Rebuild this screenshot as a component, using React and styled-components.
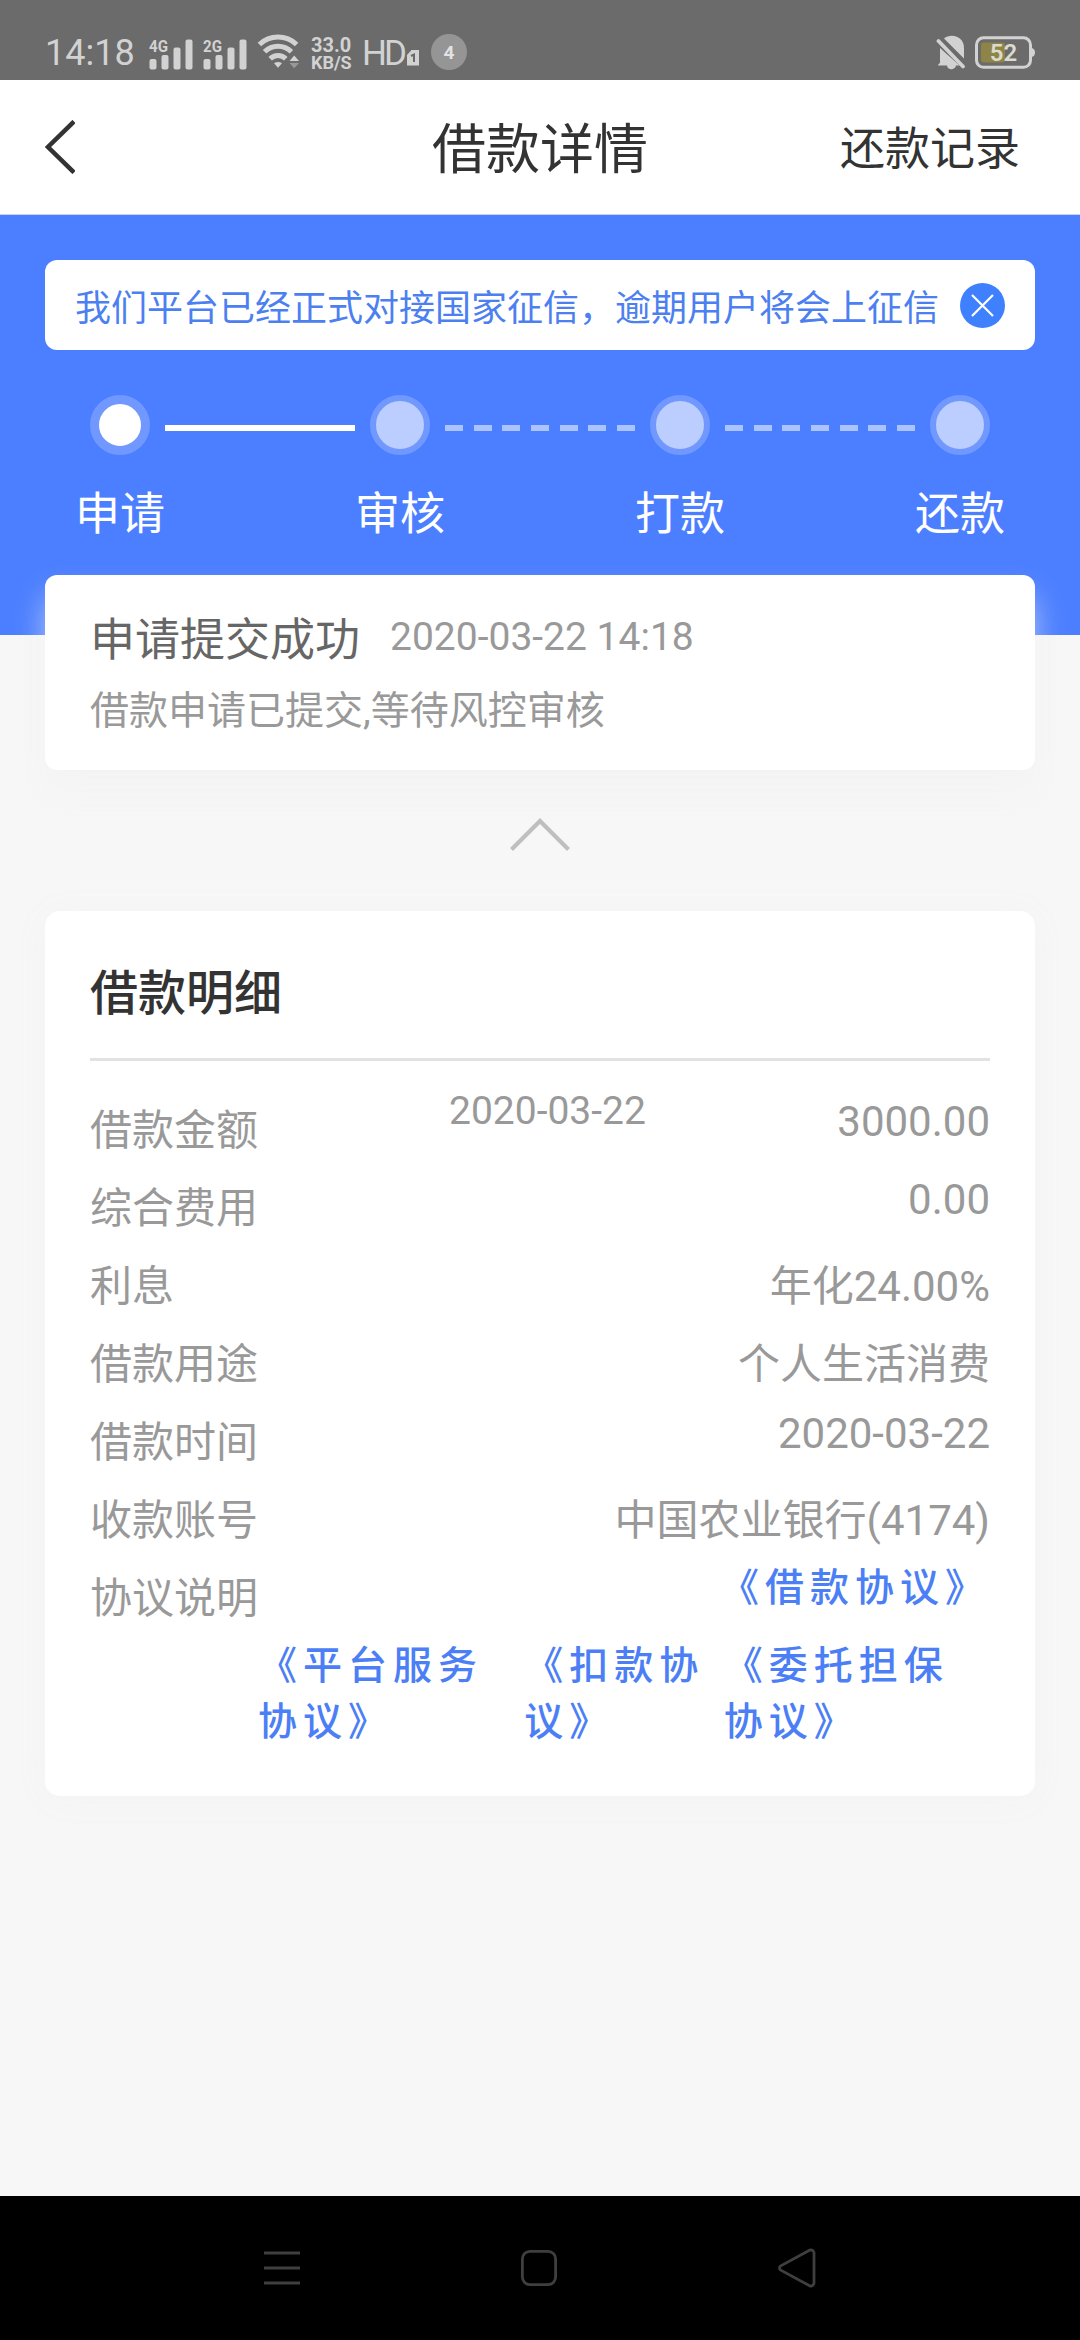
import { useState } from "react";
import styled, { createGlobalStyle, css } from "styled-components";

const GlobalStyle = createGlobalStyle`
  * {
    box-sizing: border-box;
  }
  body {
    margin: 0;
    background: #f7f7f7;
    font-family: Roboto, "Noto Sans CJK SC", sans-serif;
  }
  button {
    padding: 0;
    border: none;
    background: none;
    font: inherit;
    color: inherit;
  }
  svg {
    display: block;
    flex: none;
  }
`;

const Page = styled.div`
  width: 1080px;
  height: 2340px;
  display: flex;
  flex-direction: column;
  overflow: hidden;
`;

/* status bar */

const StatusBar = styled.div`
  height: 80px;
  padding: 26px 45px 0 45px;
  display: flex;
  align-items: center;
  background: #6b6b6b;
  color: #d2d2d2;
`;

const Clock = styled.span`
  width: 104px;
  font-size: 36px;
  line-height: 54px;
`;

const Signals = styled.div`
  display: flex;
  align-items: flex-end;
  gap: 10px;
  margin-bottom: 5px;
`;

const Speed = styled.div`
  width: 51px;
  margin-left: 10px;
  font-size: 18px;
  font-weight: 700;
  line-height: 17px;
  white-space: nowrap;
`;

const SpeedValue = styled.div`
  font-size: 20px;
  line-height: 18px;
`;

const Volte = styled.div`
  width: 69px;
  display: flex;
  align-items: center;
  gap: 3px;
  font-size: 35px;
  letter-spacing: -3px;

  svg {
    margin-top: 10px;
  }
`;

const Count = styled.span`
  width: 36px;
  height: 36px;
  margin-top: -2px;
  border-radius: 50%;
  background: #959595;
  color: #e2e2e2;
  font-size: 19px;
  font-weight: 700;
  line-height: 38px;
  text-align: center;
`;

const StatusRight = styled.div`
  margin-left: auto;
  margin-bottom: 1px;
  display: flex;
  align-items: center;
  gap: 9px;
`;

/* header */

const Header = styled.header`
  height: 135px;
  padding: 0 60px 0 45px;
  display: grid;
  grid-template-columns: 1fr auto 1fr;
  align-items: center;
  background: #fff;
  border-bottom: 1px solid #c4d6ff;
  color: #333;
`;

const Back = styled.button`
  width: 30px;
`;

const Title = styled.h1`
  margin: 0 0 4px 15px;
  font-size: 54px;
  font-weight: 400;
`;

const Records = styled.button`
  justify-self: end;
  margin-bottom: 4px;
  font-size: 45px;
`;

/* blue progress area */

const Hero = styled.section`
  height: 420px;
  padding: 45px 45px 0;
  flex: none;
  background: #4c7fff;
`;

const Notice = styled.div`
  height: 90px;
  padding: 0 30px;
  display: flex;
  align-items: center;
  justify-content: space-between;
  border-radius: 12px;
  background: #fff;
  color: #4c7ff0;
  font-size: 36px;
  white-space: nowrap;
`;

const Steps = styled.div`
  display: flex;
  justify-content: space-between;
  margin: 45px 30px 0;
`;

const Step = styled.div`
  width: 90px;
  display: flex;
  flex-direction: column;
  align-items: center;
  color: #fff;
  font-size: 45px;
  line-height: 66px;
  white-space: nowrap;
`;

const Dot = styled.span`
  width: 60px;
  height: 60px;
  margin-bottom: 27px;
  border: ${(p) => (p.$active ? 9 : 6)}px solid #7098ff;
  border-radius: 50%;
  background: ${(p) => (p.$active ? "#fff" : "#bccdff")};
`;

const Line = styled.div`
  flex: 1;
  height: 6px;
  margin-top: 30px;
  display: flex;
  justify-content: space-between;
  ${(p) =>
    p.$active &&
    css`
      background: #fff;
    `}
`;

const Dash = styled.span`
  width: 18px;
  background: #abc3ff;
`;

/* cards */

const Card = styled.section`
  margin: 0 45px;
  padding: 0 45px;
  flex: none;
  border-radius: 15px;
  background: #fff;
  box-shadow: 0 3px 36px #f3f3f3;
`;

const StatusCard = styled(Card)`
  height: 195px;
  margin-top: -60px;
  padding-top: 30px;
  border-radius: 12px;
  box-shadow: 0 21px 30px rgba(241, 241, 241, 0.6);
`;

const StatusHead = styled.div`
  display: flex;
  align-items: center;
  gap: 30px;
  height: 63px;
  color: #666;
  font-size: 45px;
`;

const StatusTime = styled.time`
  margin-top: 1px;
  color: #999;
  font-size: 39px;
`;

const StatusText = styled.p`
  margin: 11px 0 0;
  color: #999;
  font-size: 39px;
`;

const Toggle = styled.button`
  height: 141px;
  padding-top: 48px;
  display: flex;
  justify-content: center;
  flex: none;
`;

const DetailCard = styled(Card)`
  height: 885px;
`;

const DetailTitle = styled.h2`
  height: 150px;
  margin: 0 0 36px;
  padding-top: 43px;
  border-bottom: 3px solid #e2e2e2;
  color: #333;
  font-size: 48px;
  font-weight: 500;
`;

const Row = styled.div`
  height: 78px;
  display: flex;
  align-items: flex-start;
  color: #999;
  font-size: 42px;
`;

const Label = styled.span`
  flex: none;
  width: 168px;
  margin-top: -1px;
`;

const Value = styled.span`
  margin-top: ${(p) => (p.$text ? -1 : 0)}px;
  margin-left: auto;
`;

const StartDate = styled.span`
  margin: -9px 0 0 191px;
  font-size: 39px;
`;

const Agreements = styled.div`
  flex: 1;
  min-width: 0;
  margin-top: -9px;
`;

const AgreementLine = styled.div`
  height: 78px;
  display: flex;
  justify-content: flex-end;
`;

const Agreement = styled.a`
  color: #4c7ff5;
  font-size: 39px;
  font-weight: 500;
  letter-spacing: 6px;
  text-spacing-trim: space-all;
`;

const NavBar = styled.nav`
  height: 144px;
  margin-top: auto;
  padding: 0 264px;
  display: flex;
  align-items: center;
  justify-content: space-between;
  flex: none;
  background: #000;
`;

const steps = ["申请", "审核", "打款", "还款"];

const rows = [
  { label: "借款金额", value: "3000.00", date: "2020-03-22" },
  { label: "综合费用", value: "0.00" },
  { label: "利息", value: "年化24.00%", text: true },
  { label: "借款用途", value: "个人生活消费", text: true },
  { label: "借款时间", value: "2020-03-22" },
  { label: "收款账号", value: "中国农业银行(4174)", text: true },
];

const Signal = ({ type }) => (
  <svg width="44" height="38" viewBox="0 -6 44 38" fill="#d2d2d2">
    <text x="0" y="13.5" fontSize="17" fontWeight="700" textLength="19" lengthAdjust="spacingAndGlyphs">
      {type}
    </text>
    <rect x="0.5" y="21" width="7" height="10.5" rx="2" />
    <rect x="12.5" y="17" width="7" height="14.5" rx="2" />
    <rect x="24.5" y="9.5" width="7" height="22" rx="2" />
    <rect x="36.5" y="1.5" width="7" height="30" rx="2" />
  </svg>
);

const Wifi = () => (
  <svg width="44" height="36" viewBox="0 1 44 36" fill="none" stroke="#d2d2d2" strokeWidth="5">
    <path d="M2.4 11.5a27 27 0 0 1 37.2 0" />
    <path d="M7.6 18.8a19 19 0 0 1 26.8 0" />
    <path d="M13.2 25.8a11 11 0 0 1 15.6 0" />
    <path d="M17 30.2q4-2.6 8 0l-4 4.5z" fill="#d2d2d2" stroke="none" />
    <path d="M32.5 28l4.7-5.5L42 28z" fill="#d2d2d2" stroke="none" />
    <path d="M32.5 30l4.7 5.2L42 30z" fill="#999" stroke="none" />
  </svg>
);

const Bell = () => (
  <svg width="30" height="35" viewBox="0 0 30 35" fill="#d2d2d2">
    <path d="M8 3.5C14-2 28 .5 28 13v10.5z" />
    <path d="M4 13v14.5c0 1-2 1.5-2 3h9c.5 5 8 5 9 0h3.5z" />
    <path d="M2.5 6L27 31.5" stroke="#d2d2d2" strokeWidth="3.8" strokeLinecap="round" />
  </svg>
);

const Battery = () => (
  <svg width="60" height="33" viewBox="0 0 60 33">
    <path d="M57 12q3 1 3 4.5t-3 4.5z" fill="#d2d2d2" />
    <rect x="1.5" y="1.8" width="54" height="29.5" rx="7" fill="none" stroke="#d2d2d2" strokeWidth="3" />
    <rect x="6" y="6.5" width="24" height="20" rx="3" fill="#8f8447" />
    <text x="28.5" y="25" fontSize="24" fontWeight="600" textAnchor="middle" fill="#dcdacb">
      52
    </text>
  </svg>
);

const App = () => {
  const [current] = useState(0);

  return (
    <Page>
      <GlobalStyle />
      <StatusBar>
        <Clock>14:18</Clock>
        <Signals>
          <Signal type="4G" />
          <Signal type="2G" />
          <Wifi />
        </Signals>
        <Speed>
          <SpeedValue>33.0</SpeedValue>
          KB/S
        </Speed>
        <Volte>
          HD
          <svg width="12" height="16" viewBox="0 0 12 16">
            <path d="M4.5 0H12v15.5H0V5z" fill="#d2d2d2" />
            <path d="M4 6l3-1.5V12" fill="none" stroke="#6b6b6b" strokeWidth="2" />
          </svg>
        </Volte>
        <Count>4</Count>
        <StatusRight>
          <Bell />
          <Battery />
        </StatusRight>
      </StatusBar>

      <Header>
        <Back aria-label="返回">
          <svg width="30" height="54" viewBox="0 0 30 54" fill="none" stroke="#333" strokeWidth="4.5">
            <path d="M29 1.5L3 27l26 25.5" />
          </svg>
        </Back>
        <Title>借款详情</Title>
        <Records>还款记录</Records>
      </Header>

      <Hero>
        <Notice>
          我们平台已经正式对接国家征信，逾期用户将会上征信
          <svg width="45" height="45" viewBox="0 0 45 45">
            <circle cx="22.5" cy="22.5" r="22.5" fill="#3f80ff" />
            <path d="M12 12l21 21M33 12L12 33" stroke="#fff" strokeWidth="2.2" />
          </svg>
        </Notice>
        <Steps>
          {steps.map((name, i) => [
            i > 0 && (
              <Line key={`line-${name}`} $active={i - 1 === current}>
                {i - 1 !== current && [...Array(7)].map((_, n) => <Dash key={n} />)}
              </Line>
            ),
            <Step key={name}>
              <Dot $active={i === current} />
              {name}
            </Step>,
          ])}
        </Steps>
      </Hero>

      <StatusCard>
        <StatusHead>
          申请提交成功
          <StatusTime>2020-03-22 14:18</StatusTime>
        </StatusHead>
        <StatusText>借款申请已提交,等待风控审核</StatusText>
      </StatusCard>

      <Toggle aria-label="收起">
        <svg width="60" height="33" viewBox="0 0 60 33" fill="none" stroke="#bfbfbf" strokeWidth="4.2">
          <path d="M1.5 31.5L30 3l28.5 28.5" />
        </svg>
      </Toggle>

      <DetailCard>
        <DetailTitle>借款明细</DetailTitle>
        {rows.map((row) => (
          <Row key={row.label}>
            <Label>{row.label}</Label>
            {row.date && <StartDate>{row.date}</StartDate>}
            <Value $text={row.text}>{row.value}</Value>
          </Row>
        ))}
        <Row>
          <Label>协议说明</Label>
          <Agreements>
            <AgreementLine>
              <Agreement>《借款协议》</Agreement>
            </AgreementLine>
            <AgreementLine>
              <Agreement>《平台服务协议》</Agreement>
              <Agreement>《扣款协议》</Agreement>
              <Agreement>《委托担保协议》</Agreement>
            </AgreementLine>
          </Agreements>
        </Row>
      </DetailCard>

      <NavBar>
        <svg width="36" height="36" viewBox="0 0 36 36" stroke="#3f3f3f" strokeWidth="3">
          <path d="M0 3h36M0 18h36M0 33h36" />
        </svg>
        <svg width="36" height="36" viewBox="0 0 36 36" fill="none" stroke="#3f3f3f" strokeWidth="2.8">
          <rect x="1.4" y="1.4" width="33.2" height="33.2" rx="7.5" />
        </svg>
        <svg width="38" height="40" viewBox="0 0 38 40" fill="none" stroke="#3f3f3f" strokeWidth="2.8">
          <path d="M31.5 2.2L2.8 17.8q-2.6 2.2 0 4.4L31.5 37.8q4 1 4.5-2.8V5q-.5-3.8-4.5-2.8z" />
        </svg>
      </NavBar>
    </Page>
  );
};

export default App;
